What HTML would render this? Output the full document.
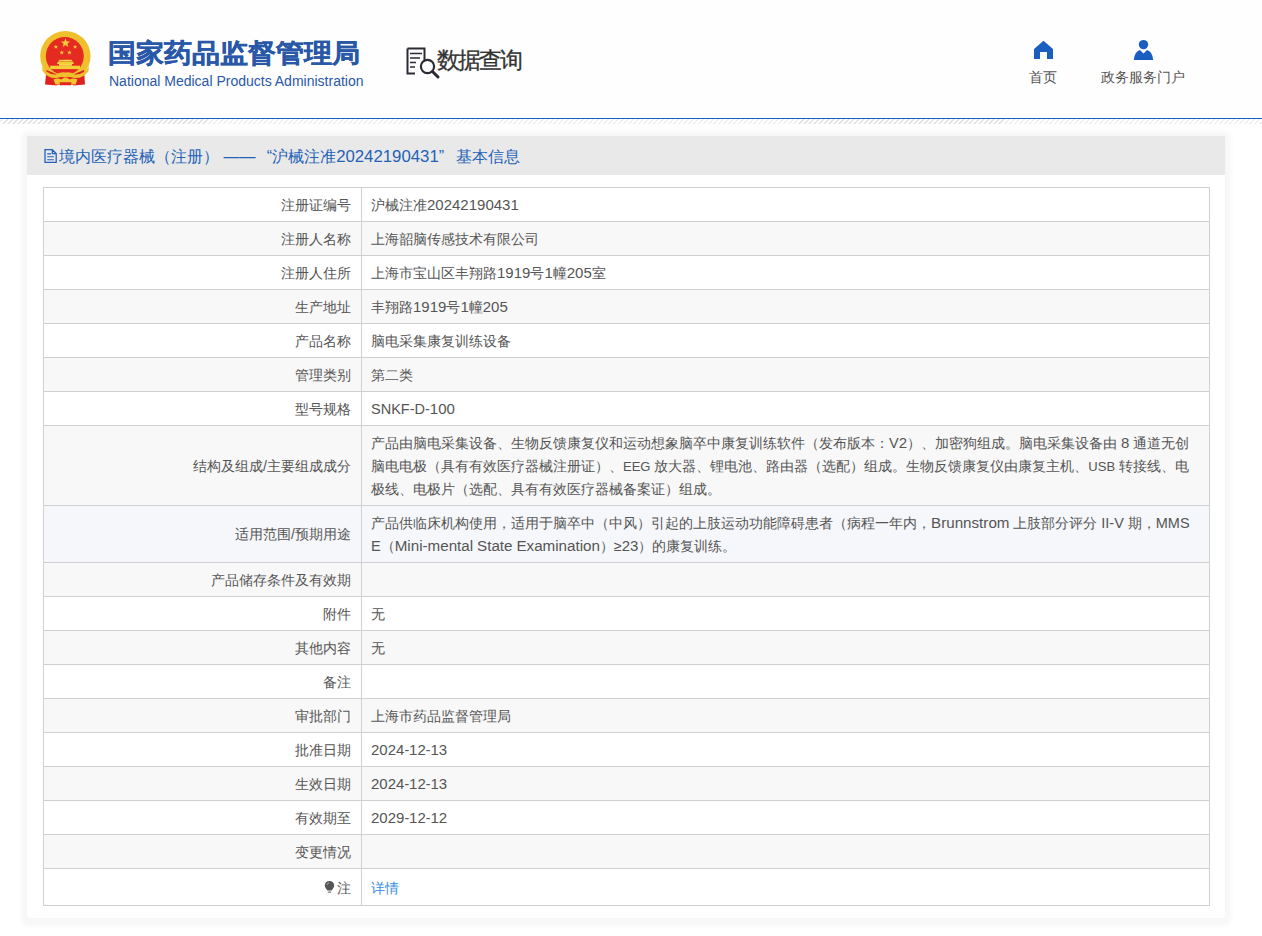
<!DOCTYPE html>
<html><head><meta charset="utf-8">
<style>
*{margin:0;padding:0;box-sizing:border-box}
html,body{width:1262px;height:936px;overflow:hidden;background:#fff;font-family:"Liberation Sans",sans-serif;}
.header{position:absolute;left:0;top:0;width:1262px;height:119px;background:#fefefe;border-bottom:1px solid #1361c2;}
.hatch{position:absolute;left:0;top:119px;width:1262px;height:5px;
 background:repeating-linear-gradient(135deg,#fff 0,#fff 2.65px,#dedede 2.65px,#dedede 3.54px);background-position:3.5px 0;}
.emblem{position:absolute;left:39px;top:30px;width:52px;height:57px}
.title-cn{position:absolute;left:108px;top:39px;font-size:28px;font-weight:900;color:#2a58a8;transform:scaleY(.93);transform-origin:0 50%;line-height:30px;white-space:nowrap}
.title-en{position:absolute;left:109px;top:73.5px;font-size:14px;color:#2a58a8;line-height:14px;white-space:nowrap}
.sj{position:absolute;left:405px;top:46px;width:36px;height:34px}
.sjtxt{position:absolute;left:437px;top:46.5px;font-size:23px;color:#333;line-height:26px;white-space:nowrap}
.sjtxt i{width:21px}
.nocjk .sjtxt i::before{left:0.6px}
html:not(.nocjk) .sjtxt{-webkit-text-stroke:0.3px #333}
.nav{position:absolute;top:69px;text-align:center;font-size:14px;color:#555;line-height:16px;white-space:nowrap}
.navi{position:absolute}
.card{position:absolute;left:27px;top:136px;width:1198px;height:782px;background:#fff;border-radius:2px;box-shadow:0 1.5px 4px 6px rgba(0,25,70,0.03),0 0 1px rgba(0,0,0,0.08);}
.card-h{position:relative;height:39px;background:#e9e9e9;color:#2462b8;font-size:16px;line-height:42px;padding-left:32px;white-space:nowrap}
.card-h .dg{font-size:16.8px}
.card-h svg{position:absolute;left:17px;top:13px;width:13px;height:14px}
table{position:absolute;left:16px;top:51px;width:1167px;border-collapse:collapse;font-size:14px;color:#555}
td .n{font-size:15px;line-height:0}
td .w{font-size:15.2px;line-height:0}
td .u{font-size:14.5px;line-height:0}
td .u.s{font-size:13px}
td i{font-size:14px;line-height:22px}
td{border:1px solid #d0d0d0;padding:5.5px 10px 4.5px 9px;line-height:23px;vertical-align:middle;white-space:nowrap}
td.l{width:318px;text-align:right;padding-right:10px}
tr:nth-child(even) td{background:#f8f8f8}
tr.hv td{background:#f5f7fa}
tr.last td{height:37px;padding-top:6px;padding-bottom:4px}
a{color:#3a8ee6;text-decoration:none}
i{display:inline-block;width:1em;font-style:normal;text-align:center;position:relative}
html:not(.nocjk) .title-cn{-webkit-text-stroke:0.4px #2a58a8}
.nocjk i{-webkit-text-fill-color:transparent}
.nocjk i::before{content:"";position:absolute;left:0.07em;width:0.86em;top:50%;height:0.86em;margin-top:-0.46em;background:currentColor;opacity:.38}
.nocjk .title-cn i::before{opacity:.86}
.nocjk .sjtxt i::before{opacity:.52}
.nocjk i.p::before{opacity:.06}
</style></head>
<body>
<div class="header">
  <svg class="emblem" viewBox="39 30 52 57">
    <defs><clipPath id="ctop"><rect x="30" y="20" width="70" height="55"/></clipPath></defs>
    <ellipse cx="65.4" cy="56" rx="25.2" ry="25" fill="#f0c02c" clip-path="url(#ctop)"/>
    <path d="M46.5 70 L45 84.5 L57 85.5 L58.5 75 Z" fill="#dd2020"/><path d="M52 75 H79 V85 H52 Z" fill="#e0261f"/>
    <path d="M84 70 L85 84.5 L73.5 85.5 L72 75 Z" fill="#dd2020"/>
    <circle cx="64.8" cy="56" r="19" fill="#e52a22"/>
    <polygon points="65.5,38.3 66.7,41.6 70.1,41.6 67.4,43.7 68.3,47 65.5,45 62.7,47 63.6,43.7 60.9,41.6 64.3,41.6" fill="#f5cf3a"/>
    <polygon points="55.9,44.6 56.5,46.2 58.2,46.2 56.9,47.2 57.3,48.8 55.9,47.8 54.5,48.8 54.9,47.2 53.6,46.2 55.3,46.2" fill="#f5cf3a"/>
    <polygon points="75.1,44.6 75.7,46.2 77.4,46.2 76.1,47.2 76.5,48.8 75.1,47.8 73.7,48.8 74.1,47.2 72.8,46.2 74.5,46.2" fill="#f5cf3a"/>
    <polygon points="61.8,50.2 62.4,51.8 64.1,51.8 62.8,52.8 63.2,54.4 61.8,53.4 60.4,54.4 60.8,52.8 59.5,51.8 61.2,51.8" fill="#f5cf3a"/>
    <polygon points="69.4,50.2 70,51.8 71.7,51.8 70.4,52.8 70.8,54.4 69.4,53.4 68,54.4 68.4,52.8 67.1,51.8 68.8,51.8" fill="#f5cf3a"/>
    <path d="M58.5 61.2 L59.5 59.8 H71.5 L72.5 61.2 Z" fill="#f7d54a"/>
    <path d="M57 64 L58 61.4 H73 L74 64 Z" fill="#f5cf3a"/>
    <rect x="59" y="64" width="13" height="1.8" fill="#f7d54a"/>
    <rect x="50.2" y="65.7" width="29.8" height="3.4" fill="#f5cf3a"/>
    <path d="M42 66 Q47 75 56 74.5 Q61 71.5 65.4 72.5 Q70 71.5 75 74.5 Q84 75 89 66 L88.5 71 Q83 79 74 78 Q70 76.5 65.4 77.5 Q61 76.5 57 78 Q48 79 42.5 71 Z" fill="#f0c02c"/>
    <path d="M53.5 79.5 Q58 77.5 61 79.5 Q65.4 76 70 79.5 Q73 77.5 77.5 79.5 L75.5 84.5 H55.5 Z" fill="#f2c531"/>
    <path d="M59.5 82.3 H71.5 L70.8 85.3 H60.2 Z" fill="#e0261f"/>
  </svg>
  <div class="title-cn"><i>国</i><i>家</i><i>药</i><i>品</i><i>监</i><i>督</i><i>管</i><i>理</i><i>局</i></div>
  <div class="title-en"><span class="w">National</span> <span class="w">Medical</span> <span class="w">Products</span> <span class="w">Administration</span></div>
  <svg class="sj" viewBox="405 46 36 34">
    <path d="M407.5 48.5 H424.5 V60" fill="none" stroke="#2b2b35" stroke-width="2"/>
    <path d="M407.5 48.5 V73.5 H415" fill="none" stroke="#2b2b35" stroke-width="2"/>
    <path d="M410 53.5 H422 M410 58 H420 M410 62.5 H416 M410 67 H415" stroke="#2b2b35" stroke-width="1.4"/>
    <circle cx="427.5" cy="66.5" r="6.6" fill="none" stroke="#2b2b35" stroke-width="2.2"/>
    <path d="M432.5 71.5 L438 77" stroke="#2b2b35" stroke-width="3" stroke-linecap="round"/>
  </svg>
  <div class="sjtxt"><i>数</i><i>据</i><i>查</i><i>询</i></div>
  <svg class="navi" style="left:1033px;top:40px" width="21" height="20" viewBox="0 0 21 20">
    <path d="M10.5 0.8 L20 9 V19 H14 V12 H7 V19 H1 V9 Z" fill="#1a5fc0"/>
  </svg>
  <svg class="navi" style="left:1133px;top:39px" width="22" height="22" viewBox="0 0 22 22">
    <circle cx="10.5" cy="5.6" r="4.7" fill="#1a5fc0"/>
    <path d="M0.8 21 Q1.5 12.5 7 11 L10.5 14.5 L14 11 Q19.5 12.5 20.2 21 Z" fill="#1a5fc0"/>
  </svg>
  <div class="nav" style="left:1029px"><i>首</i><i>页</i></div>
  <div class="nav" style="left:1101px"><i>政</i><i>务</i><i>服</i><i>务</i><i>门</i><i>户</i></div>
</div>
<div class="hatch"></div>
<div class="card">
  <div class="card-h"><svg viewBox="0 0 13 14"><path d="M1 0.7 H8.3 L12.2 4.6 V13.3 H1 Z M8.3 0.7 V4.6 H12.2" fill="none" stroke="#2462b8" stroke-width="1.3"/><path d="M3.2 4.9 H7 M3.2 7.8 H9.8 M3.2 10.8 H9.8" stroke="#2462b8" stroke-width="1.1"/></svg><i>境</i><i>内</i><i>医</i><i>疗</i><i>器</i><i>械</i><i class="p">（</i><i>注</i><i>册</i><i class="p">）</i><span style="margin-left:4.5px">——</span><span style="margin-left:11.3px">“<i>沪</i><i>械</i><i>注</i><i>准</i></span><span class="dg"><span class="n">20242190431</span></span>”<span style="margin-left:11.5px"><i>基</i><i>本</i><i>信</i><i>息</i></span></div>
  <table>
    <tr><td class="l"><i>注</i><i>册</i><i>证</i><i>编</i><i>号</i></td><td><i>沪</i><i>械</i><i>注</i><i>准</i><span class="n">20242190431</span></td></tr>
    <tr><td class="l"><i>注</i><i>册</i><i>人</i><i>名</i><i>称</i></td><td><i>上</i><i>海</i><i>韶</i><i>脑</i><i>传</i><i>感</i><i>技</i><i>术</i><i>有</i><i>限</i><i>公</i><i>司</i></td></tr>
    <tr><td class="l"><i>注</i><i>册</i><i>人</i><i>住</i><i>所</i></td><td><i>上</i><i>海</i><i>市</i><i>宝</i><i>山</i><i>区</i><i>丰</i><i>翔</i><i>路</i><span class="n">1919</span><i>号</i><span class="n">1</span><i>幢</i><span class="n">205</span><i>室</i></td></tr>
    <tr><td class="l"><i>生</i><i>产</i><i>地</i><i>址</i></td><td><i>丰</i><i>翔</i><i>路</i><span class="n">1919</span><i>号</i><span class="n">1</span><i>幢</i><span class="n">205</span></td></tr>
    <tr><td class="l"><i>产</i><i>品</i><i>名</i><i>称</i></td><td><i>脑</i><i>电</i><i>采</i><i>集</i><i>康</i><i>复</i><i>训</i><i>练</i><i>设</i><i>备</i></td></tr>
    <tr><td class="l"><i>管</i><i>理</i><i>类</i><i>别</i></td><td><i>第</i><i>二</i><i>类</i></td></tr>
    <tr><td class="l"><i>型</i><i>号</i><i>规</i><i>格</i></td><td><span class="u">SNKF-D-</span><span class="n">100</span></td></tr>
    <tr><td class="l"><i>结</i><i>构</i><i>及</i><i>组</i><i>成</i>/<i>主</i><i>要</i><i>组</i><i>成</i><i>成</i><i>分</i></td><td><i>产</i><i>品</i><i>由</i><i>脑</i><i>电</i><i>采</i><i>集</i><i>设</i><i>备</i><i class="p">、</i><i>生</i><i>物</i><i>反</i><i>馈</i><i>康</i><i>复</i><i>仪</i><i>和</i><i>运</i><i>动</i><i>想</i><i>象</i><i>脑</i><i>卒</i><i>中</i><i>康</i><i>复</i><i>训</i><i>练</i><i>软</i><i>件</i><i class="p">（</i><i>发</i><i>布</i><i>版</i><i>本</i><i class="p">：</i><span class="u">V</span><span class="n">2</span><i class="p">）</i><i class="p">、</i><i>加</i><i>密</i><i>狗</i><i>组</i><i>成</i><i class="p">。</i><i>脑</i><i>电</i><i>采</i><i>集</i><i>设</i><i>备</i><i>由</i> <span class="n">8</span> <i>通</i><i>道</i><i>无</i><i>创</i><br><i>脑</i><i>电</i><i>电</i><i>极</i><i class="p">（</i><i>具</i><i>有</i><i>有</i><i>效</i><i>医</i><i>疗</i><i>器</i><i>械</i><i>注</i><i>册</i><i>证</i><i class="p">）</i><i class="p">、</i><span class="u s">EEG</span> <i>放</i><i>大</i><i>器</i><i class="p">、</i><i>锂</i><i>电</i><i>池</i><i class="p">、</i><i>路</i><i>由</i><i>器</i><i class="p">（</i><i>选</i><i>配</i><i class="p">）</i><i>组</i><i>成</i><i class="p">。</i><i>生</i><i>物</i><i>反</i><i>馈</i><i>康</i><i>复</i><i>仪</i><i>由</i><i>康</i><i>复</i><i>主</i><i>机</i><i class="p">、</i><span class="u s">USB</span> <i>转</i><i>接</i><i>线</i><i class="p">、</i><i>电</i><br><i>极</i><i>线</i><i class="p">、</i><i>电</i><i>极</i><i>片</i><i class="p">（</i><i>选</i><i>配</i><i class="p">、</i><i>具</i><i>有</i><i>有</i><i>效</i><i>医</i><i>疗</i><i>器</i><i>械</i><i>备</i><i>案</i><i>证</i><i class="p">）</i><i>组</i><i>成</i><i class="p">。</i></td></tr>
    <tr class="hv"><td class="l"><i>适</i><i>用</i><i>范</i><i>围</i>/<i>预</i><i>期</i><i>用</i><i>途</i></td><td><i>产</i><i>品</i><i>供</i><i>临</i><i>床</i><i>机</i><i>构</i><i>使</i><i>用</i><i class="p">，</i><i>适</i><i>用</i><i>于</i><i>脑</i><i>卒</i><i>中</i><i class="p">（</i><i>中</i><i>风</i><i class="p">）</i><i>引</i><i>起</i><i>的</i><i>上</i><i>肢</i><i>运</i><i>动</i><i>功</i><i>能</i><i>障</i><i>碍</i><i>患</i><i>者</i><i class="p">（</i><i>病</i><i>程</i><i>一</i><i>年</i><i>内</i><i class="p">，</i><span class="w">Brunnstrom</span> <i>上</i><i>肢</i><i>部</i><i>分</i><i>评</i><i>分</i> <span class="u">II-V</span> <i>期</i><i class="p">，</i><span class="u">MMS</span><br><span class="u">E</span><i class="p">（</i><span class="w">Mini-mental</span> <span class="w">State</span> <span class="w">Examination</span><i class="p">）</i>≥<span class="n">23</span><i class="p">）</i><i>的</i><i>康</i><i>复</i><i>训</i><i>练</i><i class="p">。</i></td></tr>
    <tr><td class="l"><i>产</i><i>品</i><i>储</i><i>存</i><i>条</i><i>件</i><i>及</i><i>有</i><i>效</i><i>期</i></td><td></td></tr>
    <tr><td class="l"><i>附</i><i>件</i></td><td><i>无</i></td></tr>
    <tr><td class="l"><i>其</i><i>他</i><i>内</i><i>容</i></td><td><i>无</i></td></tr>
    <tr><td class="l"><i>备</i><i>注</i></td><td></td></tr>
    <tr><td class="l"><i>审</i><i>批</i><i>部</i><i>门</i></td><td><i>上</i><i>海</i><i>市</i><i>药</i><i>品</i><i>监</i><i>督</i><i>管</i><i>理</i><i>局</i></td></tr>
    <tr><td class="l"><i>批</i><i>准</i><i>日</i><i>期</i></td><td><span class="n">2024</span>-<span class="n">12</span>-<span class="n">13</span></td></tr>
    <tr><td class="l"><i>生</i><i>效</i><i>日</i><i>期</i></td><td><span class="n">2024</span>-<span class="n">12</span>-<span class="n">13</span></td></tr>
    <tr><td class="l"><i>有</i><i>效</i><i>期</i><i>至</i></td><td><span class="n">2029</span>-<span class="n">12</span>-<span class="n">12</span></td></tr>
    <tr><td class="l"><i>变</i><i>更</i><i>情</i><i>况</i></td><td></td></tr>
    <tr class="last"><td class="l"><svg width="11" height="14" viewBox="0 0 11 14" style="vertical-align:-1px;margin-right:2px"><path d="M5.5 1 C8.3 1 10.2 3 10.2 5.6 C10.2 7.6 8.9 8.8 7.6 10.6 H3.4 C2.1 8.8 0.8 7.6 0.8 5.6 C0.8 3 2.7 1 5.5 1 Z" fill="#555"/><path d="M3 5 Q3.4 3 5.2 2.6" stroke="#bbb" stroke-width="0.8" fill="none"/><rect x="3.8" y="11.5" width="3.4" height="1.2" fill="#777"/></svg><i>注</i></td><td><a><i>详</i><i>情</i></a></td></tr>
  </table>
</div>
<script>
(function(){try{
var c=document.createElement('canvas');c.width=24;c.height=24;var x=c.getContext('2d');
x.font='20px "Liberation Sans", sans-serif';x.textBaseline='top';
x.fillStyle='#000';x.fillText('\u56fd',0,0);var a=x.getImageData(0,0,24,24).data;
x.clearRect(0,0,24,24);x.fillText('\u5bb6',0,0);var b=x.getImageData(0,0,24,24).data;
var same=true;for(var i=0;i<a.length;i++){if(a[i]!==b[i]){same=false;break;}}
var sp=document.createElement('span');sp.style.cssText='position:absolute;left:-9999px;top:0;font:100px "Liberation Sans",sans-serif;white-space:nowrap';sp.textContent='\u56fd\u5bb6\u836f\u54c1';document.body.appendChild(sp);var w=sp.getBoundingClientRect().width;document.body.removeChild(sp);
if(same&&(w<385||w>415))document.documentElement.className+=' nocjk';
}catch(e){}})();
</script>
</body></html>
